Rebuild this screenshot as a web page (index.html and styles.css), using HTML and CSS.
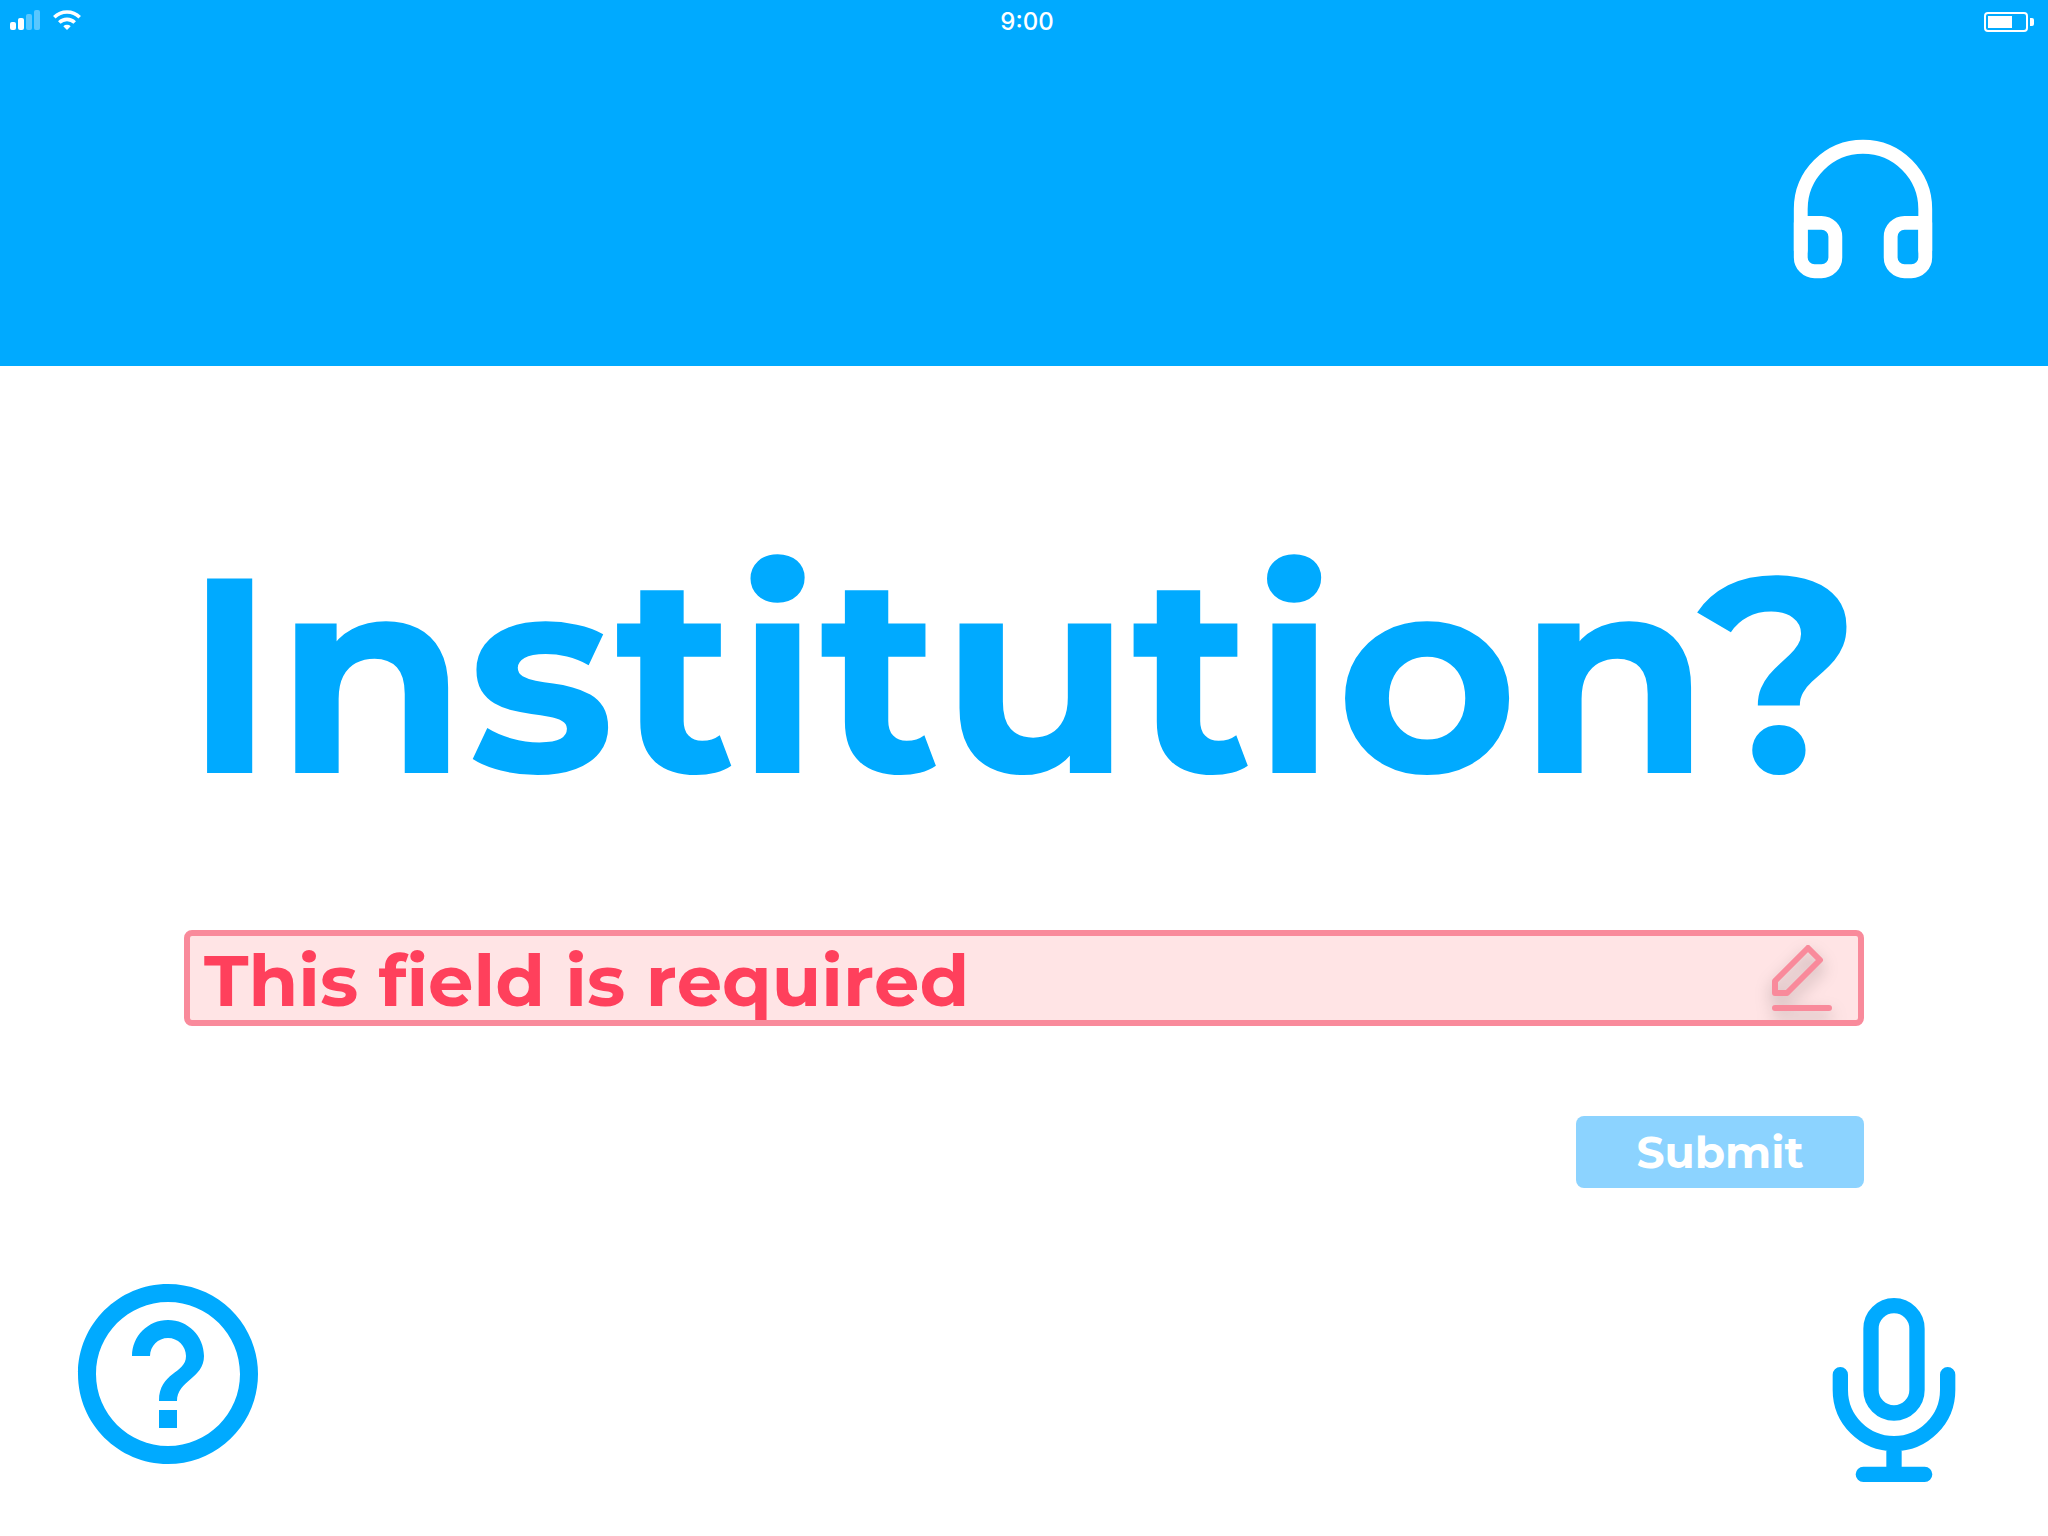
FILE: index.html
```html
<!DOCTYPE html>
<html lang="en">
<head>
<meta charset="utf-8">
<meta name="viewport" content="width=device-width, initial-scale=1">
<title>Institution?</title>
<link rel="stylesheet" href="styles.css">
</head>
<body>
<header class="header">
  <div class="status">
    <div class="status-group">
      <svg class="signal" viewBox="0 0 30 20" fill="#fff" aria-hidden="true"><rect y="12" width="6" height="8" rx="2"/><rect x="8" y="8" width="6" height="12" rx="2"/><rect x="16" y="4" width="6" height="16" rx="2" opacity=".35"/><rect x="24" width="6" height="20" rx="2" opacity=".35"/></svg>
      <svg class="wifi" viewBox="0 0 28 20" fill="none" stroke="#fff" stroke-width="3.6" aria-hidden="true"><path d="M1.3 7.3a18 18 0 0 1 25.4 0M6.3 12.5a11 11 0 0 1 15.4 0"/><path d="M14 20l-3.7-3.8a5.4 5.4 0 0 1 7.4 0z" fill="#fff" stroke="none"/></svg>
    </div>
    <time class="clock">9:00</time>
    <svg class="battery" viewBox="0 0 50 20" fill="#fff" aria-hidden="true"><rect x="1" y="1" width="42" height="18" rx="3" fill="none" stroke="#fff" stroke-width="2"/><rect x="4" y="4" width="24" height="12"/><path d="M46 6h2q2 0 2 2v4q0 2-2 2h-2z"/></svg>
  </div>
  <div class="toolbar">
    <button class="icon-button" type="button" aria-label="Listen">
      <svg class="headphones" viewBox="0 0 24 24" fill="none" stroke="currentColor" stroke-width="2" stroke-linecap="round" stroke-linejoin="round"><path d="M3 18v-6a9 9 0 0 1 18 0v6"/><path d="M21 19a2 2 0 0 1-2 2h-1a2 2 0 0 1-2-2v-3a2 2 0 0 1 2-2h3zM3 19a2 2 0 0 0 2 2h1a2 2 0 0 0 2-2v-3a2 2 0 0 0-2-2H3z"/></svg>
    </button>
  </div>
</header>
<main>
  <form class="form" novalidate>
    <label class="question" for="institution">Institution?</label>
    <div class="field">
      <input class="field-input" id="institution" type="text" placeholder="This field is required" aria-invalid="true" required>
      <svg class="edit" viewBox="0 0 60 66" fill="none" stroke="currentColor" stroke-width="6" stroke-linecap="round" stroke-linejoin="round" aria-hidden="true"><path d="M3 48V36L36 3L48 15L15 48ZM3 63H57"/></svg>
    </div>
    <button class="submit" type="submit">Submit</button>
  </form>
</main>
<footer class="footer">
  <button class="icon-button" type="button" aria-label="Help">
    <svg class="help" viewBox="0 0 24 24" fill="currentColor"><path d="M11 18h2v-2h-2v2zm1-16C6.480 2 2 6.480 2 12s4.480 10 10 10 10-4.480 10-10S17.520 2 12 2zm0 18c-4.410 0-8-3.590-8-8s3.590-8 8-8 8 3.590 8 8-3.590 8-8 8zm0-14c-2.210 0-4 1.790-4 4h2c0-1.100.9-2 2-2s2 .9 2 2c0 2-3 1.750-3 5h2c0-2.250 3-2.500 3-5 0-2.210-1.790-4-4-4z"/></svg>
  </button>
  <button class="icon-button" type="button" aria-label="Speak">
    <svg class="mic" viewBox="0 0 24 24" fill="none" stroke="currentColor" stroke-width="2" stroke-linecap="round" stroke-linejoin="round"><path d="M12 1a3 3 0 0 0-3 3v8a3 3 0 0 0 6 0V4a3 3 0 0 0-3-3z"/><path d="M19 10v2a7 7 0 0 1-14 0v-2M12 19v4M8 23h8"/></svg>
  </button>
</footer>
</body>
</html>
```
FILE: styles.css
```css
* {
  box-sizing: border-box;
}

body {
  margin: 0;
  background: #fff;
  color: #00aaff;
  font-family: Montserrat, Inter, sans-serif;
  font-weight: 700;
}

svg {
  display: block;
}

button,
input {
  margin: 0;
  padding: 0;
  border: 0;
  background: none;
  color: inherit;
  font: inherit;
}

.header {
  padding-bottom: 74px;
  background: #00aaff;
  color: #fff;
}

.status {
  display: grid;
  grid-template-columns: 1fr auto 1fr;
  align-items: center;
  height: 44px;
  padding: 0 14px 0 10px;
}

.status-group {
  display: flex;
  gap: 13px;
  padding-bottom: 4px;
}

.signal {
  width: 30px;
  height: 20px;
}

.wifi {
  width: 28px;
  height: 20px;
}

.clock {
  padding-left: 10px;
  font: 500 24px/44px Inter, sans-serif;
}

.battery {
  width: 50px;
  height: 20px;
  justify-self: end;
}

.toolbar {
  display: flex;
  justify-content: flex-end;
  padding: 82px 102px 0;
}

.headphones {
  width: 166px;
  height: 166px;
}

.form {
  display: flex;
  flex-direction: column;
  padding: 138px 184px 78px;
}

.question {
  margin-bottom: 86px;
  font-size: 278px;
  line-height: 340px;
}

.field {
  display: flex;
  align-items: center;
  height: 96px;
  margin-bottom: 90px;
  padding: 0 26px 0 14px;
  border: 6px solid #f98a9b;
  border-radius: 8px;
  background: #ffe4e5;
  overflow: hidden;
}

.field-input {
  flex: 1;
  min-width: 0;
  height: 84px;
  padding-top: 4px;
  outline: 0;
  color: #ff405c;
  font-size: 72px;
  font-kerning: none;
  font-variant-ligatures: none;
}

.field-input::placeholder {
  color: #ff405c;
  opacity: 1;
}

.edit {
  width: 60px;
  height: 66px;
  color: #f98a9b;
  filter: drop-shadow(0 8px 8px rgba(0, 0, 0, 0.25));
}

.submit {
  align-self: flex-end;
  width: 288px;
  height: 72px;
  border-radius: 8px;
  background: #8cd3ff;
  color: #fff;
  font-size: 44px;
}

.footer {
  display: flex;
  justify-content: space-between;
  align-items: center;
  padding: 0 62px 0 60px;
}

.help {
  width: 216px;
  height: 216px;
}

.mic {
  width: 184px;
  height: 184px;
  margin-top: 32px;
}
```
